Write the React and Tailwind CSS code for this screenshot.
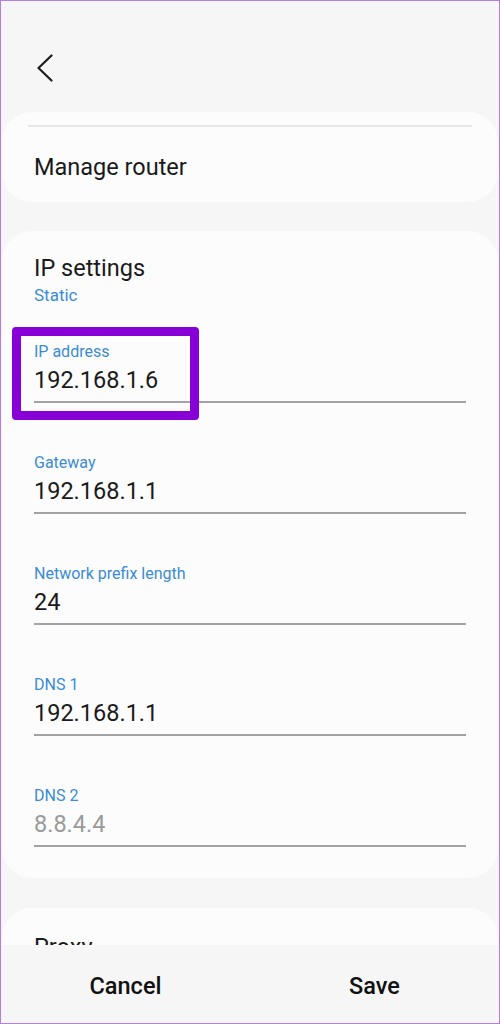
import React from 'react';

const fields = [
  { label: 'IP address', value: '192.168.1.6' },
  { label: 'Gateway', value: '192.168.1.1' },
  { label: 'Network prefix length', value: '24' },
  { label: 'DNS 1', value: '192.168.1.1' },
  { label: 'DNS 2', value: '8.8.4.4', hint: true },
];

function Field({ label, value, hint }) {
  return (
    <div>
      <div className="text-[16px] leading-[20px] text-[#3a8bd6]">{label}</div>
      <div
        className={`mt-[3.5px] text-[23.5px] leading-[28px] ${
          hint ? 'text-[#9a9a9a]' : 'text-[#1a1a1a]'
        }`}
      >
        {value}
      </div>
      <div className="mt-[7.5px] h-[1.5px] bg-[#a3a3a3]" />
    </div>
  );
}

export default function App() {
  return (
    <div
      className="h-[1024px] w-[500px] flex flex-col overflow-hidden border border-[#b57ce6] bg-[#f6f6f6]"
      style={{ fontFamily: 'Roboto, "Noto Sans", sans-serif' }}
    >
      <div className="flex-1 overflow-hidden">
        {/* header */}
        <div className="h-[111px] pl-[35px] pt-[53px]">
          <svg width="18" height="28" viewBox="0 0 18 28" fill="none">
            <path
              d="M15.5 1.5 L2.5 14 L15.5 26.5"
              stroke="#1c1c1c"
              strokeWidth="2.2"
              strokeLinecap="round"
              strokeLinejoin="round"
            />
          </svg>
        </div>

        {/* manage router card */}
        <div className="mx-px rounded-[30px] bg-[#fcfcfc] pt-[13px] pb-[21px]">
          <div className="mx-[26px] h-[1.5px] bg-[#e8e8e8]" />
          <div className="mt-[26px] pl-[32px] text-[23.5px] leading-[28px] text-[#1a1a1a]">
            Manage router
          </div>
        </div>

        {/* ip settings card */}
        <div className="relative mx-px mt-[29px] rounded-[30px] bg-[#fcfcfc] pt-[23.5px] pb-[31.5px] pl-[32px] pr-[32px]">
          <div className="text-[23.5px] leading-[28px] text-[#1a1a1a]">IP settings</div>
          <div className="mt-[2px] text-[17px] leading-[22px] text-[#3a8bd6]">Static</div>
          <div className="mt-[36px] flex flex-col gap-[50.5px]">
            {fields.map((f) => (
              <Field key={f.label} {...f} />
            ))}
          </div>
          <div className="absolute left-[10px] top-[96px] h-[93px] w-[187px] rounded-[4px] border-[9px] border-[#8700d5]" />
        </div>

        {/* proxy card */}
        <div className="mx-px mt-[30px] h-[80px] rounded-[30px] bg-[#fcfcfc] pt-[25px] pl-[32px]">
          <div className="text-[23.5px] leading-[28px] text-[#1a1a1a]">Proxy</div>
        </div>
      </div>

      {/* bottom bar */}
      <div className="h-[78px] flex shrink-0 bg-[#f6f6f6] pt-[5px]">
        <div className="flex-1 flex items-center justify-center text-[23.5px] font-medium text-[#111]">
          Cancel
        </div>
        <div className="flex-1 flex items-center justify-center text-[23.5px] font-medium text-[#111]">
          Save
        </div>
      </div>
    </div>
  );
}
